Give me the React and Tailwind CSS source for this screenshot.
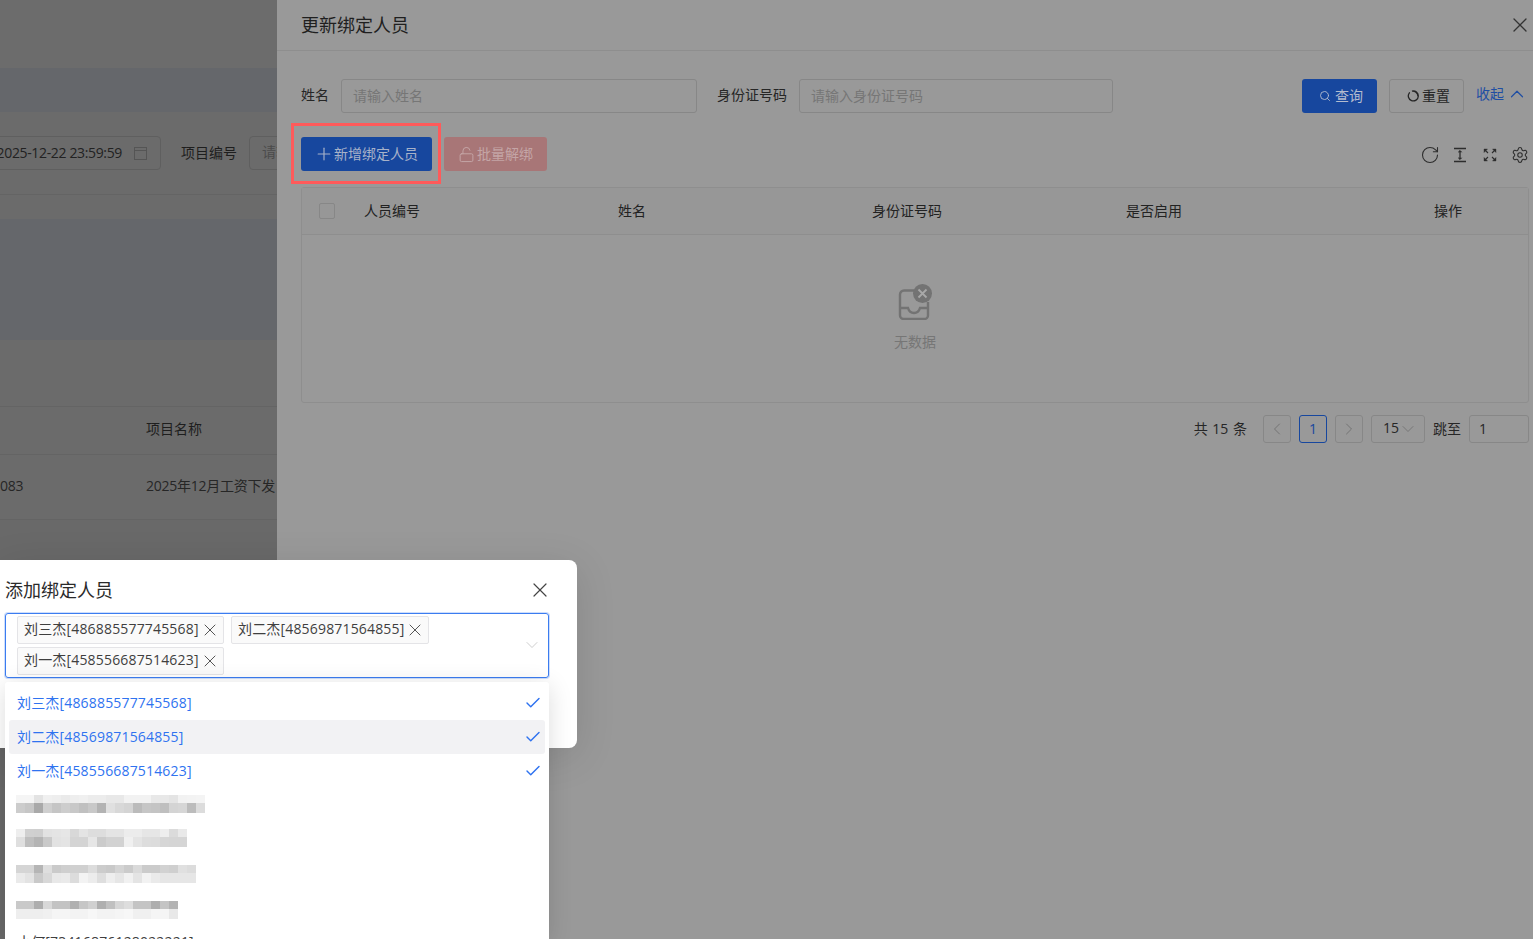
import React from "react";
import { Plus, Search, ChevronUp, ChevronDown, ChevronLeft, ChevronRight, X, Check, RotateCw, Settings, LockOpen } from "lucide-react";

const font = "font-['Open_Sans','Noto_Sans_CJK_SC',sans-serif]";

const blurRows = [
  {
    pad: "pt-[7px]",
    a: [245, 245, 227, 240, 238, 234, 238, 240, 236, 236, 232, 232, 242, 242, 242, 232, 232, 228, 242, 243, 244],
    b: [204, 198, 169, 207, 197, 205, 200, 192, 200, 179, 224, 216, 212, 187, 198, 196, 191, 212, 214, 188, 220],
  },
  {
    pad: "pt-[7px]",
    a: [238, 208, 207, 226, 228, 230, 216, 228, 221, 221, 228, 228, 236, 236, 230, 230, 238, 219, 233],
    b: [223, 190, 180, 201, 226, 228, 212, 212, 230, 203, 210, 210, 240, 228, 221, 220, 214, 213, 213],
  },
  {
    pad: "pt-[9px]",
    a: [213, 213, 181, 222, 202, 207, 208, 208, 220, 204, 201, 212, 203, 218, 203, 203, 210, 207, 224, 220],
    b: [234, 227, 201, 216, 232, 234, 220, 243, 236, 222, 238, 230, 241, 228, 242, 234, 230, 230, 230, 230],
  },
  {
    pad: "pt-[11px]",
    a: [201, 201, 174, 216, 195, 195, 176, 198, 208, 175, 192, 214, 221, 196, 196, 174, 196, 179],
    b: [238, 238, 238, 240, 245, 245, 243, 243, 247, 243, 243, 245, 247, 240, 240, 245, 245, 232],
  },
];

function Pixelated({ row }) {
  const shade = (v) => `rgb(${v},${v},${v})`;
  return (
    <div className="flex flex-col">
      <div className="flex">
        {row.a.map((v, j) => (
          <div key={j} className="w-[9px] h-[8px]" style={{ background: shade(v) }} />
        ))}
      </div>
      <div className="flex">
        {row.b.map((v, j) => (
          <div key={j} className="w-[9px] h-[10px]" style={{ background: shade(v) }} />
        ))}
      </div>
    </div>
  );
}

function BackgroundPage() {
  return (
    <div className="w-[277px] h-full shrink-0 overflow-hidden bg-[#6c6c6c] flex flex-col text-[14px] text-[#1f1f1f]">
      <div className="h-[68px] shrink-0 bg-[#6c6c6c]" />
      <div className="h-[44px] shrink-0 bg-[#65676b]" />
      <div className="h-[83px] shrink-0 bg-[#6b6b6b] pt-[24px] border-b border-[#646464] flex flex-col">
        <div className="flex items-center -ml-[20px] shrink-0">
          <div className="w-[181px] h-[34px] shrink-0 border border-[#5f5f5f] rounded flex items-center pr-[13px] justify-end gap-[12px]">
            <span className="whitespace-nowrap text-[#222222] tracking-[-0.35px] pb-[1px]">2025-12-22 23:59:59</span>
            <svg width="13" height="13" viewBox="0 0 13 13" fill="none" stroke="#555555" strokeWidth="1" className="shrink-0">
              <rect x="0.5" y="0.5" width="12" height="12" />
              <path d="M0.5 3.5h12" />
            </svg>
          </div>
          <span className="ml-[20px] shrink-0 text-[#1e1e1e] pb-[1px]">项目编号</span>
          <div className="ml-[12px] w-[200px] h-[34px] shrink-0 border border-[#5f5f5f] rounded pl-[12px] leading-[30px] text-[#4c4c4c] whitespace-nowrap">请输入项目编号</div>
        </div>
      </div>
      <div className="h-[24px] shrink-0 bg-[#6b6b6b]" />
      <div className="h-[121px] shrink-0 bg-[#65676b]" />
      <div className="h-[67px] shrink-0 bg-[#6b6b6b] border-b border-[#646464]" />
      <div className="h-[48px] shrink-0 flex items-center pl-[146px] pb-[4px] border-b border-[#646464] bg-[#6b6b6b] text-[#1e1e1e]">项目名称</div>
      <div className="h-[65px] shrink-0 flex items-center pb-[4px] border-b border-[#646464] bg-[#6b6b6b] text-[#262626] tracking-[-0.25px]">
        <span className="w-[146px] shrink-0">083</span>
        <span className="whitespace-nowrap">2025年12月工资下发</span>
      </div>
      <div className="flex-1 bg-[#696969]" />
    </div>
  );
}

function FieldInput({ width, placeholder }) {
  return (
    <div className={`${width} h-[34px] border border-[#878787] rounded-[3px] pl-[11px] pb-[2px] flex items-center text-[#767676] text-[14px] shrink-0`}>
      {placeholder}
    </div>
  );
}

function ColumnHeight() {
  return (
    <svg width="16" height="16" viewBox="0 0 16 16" fill="none" stroke="#2d2d2d" strokeWidth="1.3">
      <path d="M2 1.5h12M2 14.5h12M8 4v8" />
      <path d="M6.2 5.2 8 3.4l1.8 1.8M6.2 10.8 8 12.6l1.8-1.8" fill="#2d2d2d" strokeWidth="0.8" />
    </svg>
  );
}

function Fullscreen() {
  return (
    <svg width="16" height="16" viewBox="0 0 16 16" fill="#2d2d2d" stroke="#2d2d2d">
      <path d="M2 5.5V2h3.5zM14 5.5V2h-3.5zM2 10.5V14h3.5zM14 10.5V14h-3.5z" strokeLinejoin="round" strokeWidth="0.4" />
      <path d="M3 3l3 3M13 3l-3 3M3 13l3-3M13 13l-3-3" strokeWidth="1.1" />
    </svg>
  );
}

function ResetIcon() {
  return (
    <svg width="12" height="12" viewBox="0 0 12 12" fill="none" stroke="#262626" strokeWidth="1.3" className="shrink-0">
      <path d="M2.4 2.800A5 5 0 1 0 5 1.100c2.600-.4 5.900 1.600 5.900 4.900" strokeLinecap="round" />
    </svg>
  );
}

function EmptyIcon() {
  return (
    <svg width="34" height="36" viewBox="0 0 34 36" fill="none">
      <path d="M16 6.500H6A4 4 0 0 0 2 10.500v21a3.500 3.500 0 0 0 3.500 3.500h21a3.500 3.500 0 0 0 3.500-3.500V18" stroke="#737373" strokeWidth="2.4" />
      <path d="M2 24h8c1 3.500 3 5 6 5s5-1.500 6-5h8" stroke="#737373" strokeWidth="2.4" />
      <circle cx="24.500" cy="9.500" r="9.500" fill="#737373" />
      <path d="m20.500 5.500 8 8m0-8-8 8" stroke="#a8a8a8" strokeWidth="1.8" />
    </svg>
  );
}

function PageBtn({ children }) {
  return (
    <div className="w-[28px] h-[28px] border border-[#878787] rounded-[3px] flex items-center justify-center text-[#707070] shrink-0">
      {children}
    </div>
  );
}

function Drawer() {
  return (
    <div className="flex-1 h-full bg-[#999999] flex flex-col text-[14px] text-[#262626] min-w-0">
      <div className="h-[51px] shrink-0 border-b border-[#8e8e8e] flex items-center justify-between pl-[24px] pr-[1px]">
        <span className="text-[18px] text-[#1f1f1f]">更新绑定人员</span>
        <X size={24} strokeWidth={1.3} className="text-[#333333]" />
      </div>
      <div className="pt-[28px] pl-[24px] pr-[4px] flex flex-col">
        <div className="flex items-center h-[34px]">
          <span className="w-[40px] shrink-0 pb-[4px]">姓名</span>
          <FieldInput width="w-[356px]" placeholder="请输入姓名" />
          <span className="ml-[20px] w-[82px] shrink-0 pb-[4px]">身份证号码</span>
          <FieldInput width="w-[314px]" placeholder="请输入身份证号码" />
          <div className="ml-[189px] w-[75px] h-[34px] shrink-0 rounded-[3px] bg-[#17479e] text-[#b3bccf] flex items-center pl-[17px] gap-[4px]">
            <Search size={12} strokeWidth={1.8} />
            <span className="pb-[2px]">查询</span>
          </div>
          <div className="ml-[12px] w-[75px] h-[34px] shrink-0 rounded-[3px] border border-[#878787] flex items-center pl-[17px] gap-[3px] text-[#262626]">
            <ResetIcon />
            <span className="pb-[2px]">重置</span>
          </div>
          <div className="ml-[12px] flex items-center gap-[2px] text-[#1f4ea3] -mt-[5px] shrink-0">
            <span className="pb-[1px]">收起</span>
            <ChevronUp size={22} strokeWidth={1.3} />
          </div>
        </div>
        <div className="flex items-center h-[34px] mt-[24px] justify-between">
          <div className="flex items-center gap-[12px]">
            <div className="w-[131px] h-[34px] rounded-[3px] bg-[#17479e] text-[#a7b2c9] flex items-center pl-[13px]">
              <Plus size={20} strokeWidth={1.4} className="shrink-0" />
              <span className="pb-[2px]">新增绑定人员</span>
            </div>
            <div className="w-[103px] h-[34px] rounded-[3px] bg-[#a87677] text-[#c4a5a6] flex items-center pl-[14px] gap-[2px]">
              <LockOpen size={17} strokeWidth={1.4} className="shrink-0" />
              <span className="pb-[2px]">批量解绑</span>
            </div>
          </div>
          <div className="flex items-center gap-[14px] mt-[2px] pr-[1px]">
            <div className="w-[16px] h-[16px] flex items-center justify-center">
              <RotateCw size={20} strokeWidth={1.3} className="text-[#2d2d2d] shrink-0" />
            </div>
            <ColumnHeight />
            <Fullscreen />
            <div className="w-[16px] h-[16px] flex items-center justify-center">
              <Settings size={18} strokeWidth={1.4} className="text-[#2d2d2d] shrink-0" />
            </div>
          </div>
        </div>
        <div className="mt-[16px] h-[216px] border border-[#8e8e8e] rounded-[3px] flex flex-col">
          <div className="h-[47px] shrink-0 border-b border-[#8e8e8e] bg-[#979797] flex items-center text-[#222222]">
            <div className="w-[62px] pl-[17px] shrink-0">
              <div className="w-[16px] h-[16px] border border-[#878787] rounded-[2px]" />
            </div>
            <span className="w-[254px] shrink-0 pb-[2px]">人员编号</span>
            <span className="w-[254px] shrink-0 pb-[2px]">姓名</span>
            <span className="w-[254px] shrink-0 pb-[2px]">身份证号码</span>
            <span className="w-[308px] shrink-0 pb-[2px]">是否启用</span>
            <span className="shrink-0 pb-[2px]">操作</span>
          </div>
          <div className="flex-1 flex flex-col items-center pt-[49px]">
            <EmptyIcon />
            <span className="mt-[12px] text-[14px] text-[#767676] leading-[20px]">无数据</span>
          </div>
        </div>
        <div className="flex items-center justify-end h-[28px] mt-[12px]">
          <span className="mr-[16px] pb-[2px] [word-spacing:1px]">共 15 条</span>
          <PageBtn><ChevronLeft size={20} strokeWidth={1.1} /></PageBtn>
          <div className="ml-[8px] w-[28px] h-[28px] border border-[#17479e] rounded-[3px] flex items-center justify-center text-[#17479e] shrink-0 pb-[2px]">1</div>
          <div className="ml-[8px]"><PageBtn><ChevronRight size={20} strokeWidth={1.1} /></PageBtn></div>
          <div className="ml-[8px] w-[54px] h-[28px] border border-[#878787] rounded-[3px] flex items-center pl-[11px] shrink-0">
            <span className="pb-[3px]">15</span>
            <ChevronDown size={20} strokeWidth={1} className="text-[#707070] shrink-0 -ml-[1px]" />
          </div>
          <span className="ml-[8px] w-[36px] shrink-0 pb-[2px]">跳至</span>
          <div className="w-[60px] h-[28px] border border-[#878787] rounded-[3px] flex items-center pl-[9px] pb-[2px] shrink-0">1</div>
        </div>
      </div>
    </div>
  );
}

function Tag({ children, w }) {
  return (
    <div className={`${w} h-[28px] rounded-[2px] border border-[#e4e4e7] bg-[#fafafa] flex items-center justify-between pl-[6px] pr-[3px] text-[14px] text-[#3f3f3f] shrink-0`}>
      <span className="whitespace-nowrap tracking-[0.17px] pb-[3px]">{children}</span>
      <X size={20} strokeWidth={1.2} className="text-[#555555] shrink-0" />
    </div>
  );
}

function Option({ children, hover }) {
  return (
    <div className={`h-[34px] rounded-[3px] flex items-center justify-between pl-[8px] pr-[3px] text-[14px] text-[#2f73f0] ${hover ? "bg-[#f2f2f4]" : ""}`}>
      <span className="whitespace-nowrap tracking-[0.17px] pb-[2px]">{children}</span>
      <Check size={18} strokeWidth={1.9} />
    </div>
  );
}

function AddModal() {
  return (
    <div className="absolute left-0 top-[560px] w-[577px] h-[188px] bg-white rounded-r-[8px] shadow-[0_8px_40px_rgba(0,0,0,0.12)] pl-[5px] pr-[28px] flex flex-col">
      <div className="h-[53px] shrink-0 flex items-center justify-between -mr-[3px]">
        <span className="text-[18px] text-[#2a2a2a] mt-[7px]">添加绑定人员</span>
        <X size={24} strokeWidth={1.2} className="text-[#444444] mt-[7px]" />
      </div>
      <div className="relative h-[65px] shrink-0 border border-[#3b7cf0] shadow-[0_0_0_1px_rgba(59,124,240,0.25)] rounded-[3px] pl-[11px] pt-[2px] flex flex-wrap content-start gap-x-[7px] gap-y-[3px] pr-[100px]">
        <Tag w="w-[207px]">刘三杰[486885577745568]</Tag>
        <Tag w="w-[198px]">刘二杰[48569871564855]</Tag>
        <Tag w="w-[207px]">刘一杰[458556687514623]</Tag>
        <ChevronDown size={20} strokeWidth={1} className="absolute right-[6px] top-[21px] text-[#c4c4c4]" />
      </div>
    </div>
  );
}

function Dropdown() {
  return (
    <div className="absolute left-[5px] top-[682px] w-[544px] h-[257px] overflow-hidden bg-white rounded-t-[3px] shadow-[0_4px_24px_rgba(0,0,0,0.14)] px-[4px] pt-[4px]">
      <Option>刘三杰[486885577745568]</Option>
      <Option hover>刘二杰[48569871564855]</Option>
      <Option>刘一杰[458556687514623]</Option>
      {blurRows.map((row, i) => (
        <div key={i} className={`h-[34px] pl-[7px] ${row.pad}`}>
          <Pixelated row={row} />
        </div>
      ))}
      <div className="h-[34px] flex items-center pl-[8px] text-[14px] text-[#3f3f3f] whitespace-nowrap tracking-[0.17px]">小何[73416876128022221]</div>
    </div>
  );
}

export default function App() {
  return (
    <div className={`relative w-[1533px] h-[939px] overflow-hidden flex bg-[#999999] ${font}`}>
      <BackgroundPage />
      <Drawer />
      <div className="absolute left-[291px] top-[123px] w-[150px] h-[61px] border-[3px] border-[#ff5a5a]" />
      <AddModal />
      <Dropdown />
    </div>
  );
}
